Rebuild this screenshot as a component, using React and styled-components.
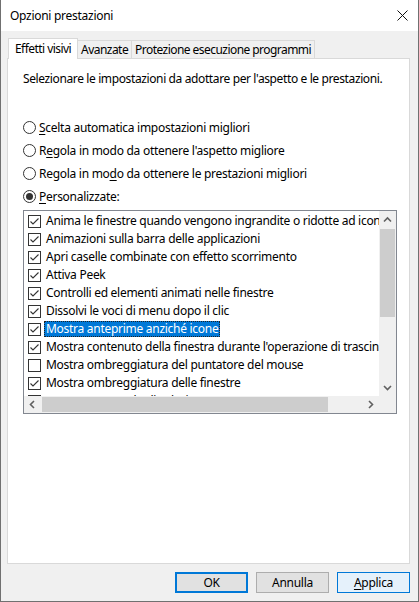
import React from "react";
import styled, { createGlobalStyle } from "styled-components";

const Global = createGlobalStyle`
  html, body { margin: 0; padding: 0; background: #f0f0f0; }
  body {
    font-family: "Noto Sans", "Segoe UI", sans-serif;
    font-size: 12px;
    letter-spacing: -0.28px;
    color: #000;
  }
  * { box-sizing: border-box; }
`;

const Window = styled.div`
  width: 419px;
  height: 602px;
  display: flex;
  flex-direction: column;
  border: 1px solid #707070;
  border-top: none;
  background: #f0f0f0;
`;

const TitleBar = styled.div`
  height: 31px;
  flex: none;
  background: #fff;
  display: flex;
  align-items: center;
  justify-content: space-between;
  padding: 0 10px 0 9px;
  line-height: 16px;
`;

const Client = styled.div`
  flex: 1;
  display: flex;
  flex-direction: column;
  padding: 7px 8px 8px 6px;
  min-height: 0;
`;

const TabStrip = styled.div`
  height: 20px;
  flex: none;
  display: flex;
  align-items: flex-end;
  padding-left: 1px;
`;

const Tab = styled.div`
  flex: none;
  height: ${(p) => (p.$active ? 21 : 18)}px;
  margin-bottom: ${(p) => (p.$active ? -1 : 0)}px;
  padding: ${(p) => (p.$active ? "0 6px" : "1px 3px 0")};
  background: ${(p) => (p.$active ? "#fff" : "#f0f0f0")};
  border: 1px solid #d9d9d9;
  border-bottom: none;
  border-left: ${(p) => (p.$first ? "1px solid #d9d9d9" : "none")};
  position: relative;
  z-index: ${(p) => (p.$active ? 2 : 1)};
  display: flex;
  align-items: center;
  justify-content: center;
  line-height: 16px;
  letter-spacing: -0.55px;
  white-space: nowrap;
`;

const Panel = styled.div`
  flex: 1;
  min-height: 0;
  background: #fff;
  border: 1px solid #d9d9d9;
  padding: 12px 0 0 15px;
  display: flex;
  flex-direction: column;
`;

const Description = styled.div`
  line-height: 16px;
  white-space: nowrap;
  letter-spacing: -0.38px;
`;

const RadioGroup = styled.div`
  margin-top: 29px;
  display: flex;
  flex-direction: column;
`;

const RadioRow = styled.div`
  height: 23px;
  display: flex;
  align-items: center;
  gap: 3px;
  line-height: 16px;
  white-space: nowrap;
`;

const RadioCircle = styled.span`
  width: 13px;
  height: 13px;
  flex: none;
  border: 1px solid #333;
  border-radius: 50%;
  background: #fff;
  display: flex;
  align-items: center;
  justify-content: center;
  &::after {
    content: "";
    width: 7px;
    height: 7px;
    border-radius: 50%;
    background: ${(p) => (p.$checked ? "#333" : "transparent")};
  }
`;

const ListBox = styled.div`
  margin-top: 2px;
  width: 374px;
  height: 204px;
  flex: none;
  border: 1px solid #828790;
  display: grid;
  grid-template-columns: minmax(0, 1fr) 17px;
  grid-template-rows: minmax(0, 1fr) 17px;
  background: #fff;
`;

const ListContent = styled.div`
  overflow: hidden;
  min-width: 0;
  min-height: 0;
  padding: 1px 0 0 4px;
`;

const ItemRow = styled.div`
  height: 18px;
  display: flex;
  align-items: center;
  white-space: nowrap;
`;

const CheckBox = styled.span`
  width: 13px;
  height: 13px;
  flex: none;
  border: 1px solid #333;
  background: #fff;
  display: flex;
  align-items: center;
  justify-content: center;
`;

const ItemLabel = styled.span`
  margin-left: 3px;
  height: 16px;
  line-height: 14px;
  padding: 0 1px;
  border: 1px dotted ${(p) => (p.$selected ? "#222" : "transparent")};
  background: ${(p) => (p.$selected ? "#0078d7" : "transparent")};
  color: ${(p) => (p.$selected ? "#fff" : "#000")};
`;

const VScroll = styled.div`
  background: #f0f0f0;
  display: flex;
  flex-direction: column;
  min-height: 0;
`;

const HScroll = styled.div`
  background: #f0f0f0;
  display: flex;
  min-width: 0;
`;

const Corner = styled.div`
  background: #f0f0f0;
`;

const ArrowBox = styled.div`
  width: 17px;
  height: 17px;
  flex: none;
  display: flex;
  align-items: center;
  justify-content: center;
`;

const VTrack = styled.div`
  flex: 1;
  padding: 1px 1px 0 1px;
`;

const VThumb = styled.div`
  height: 88px;
  background: #cdcdcd;
`;

const HTrack = styled.div`
  flex: 1;
  padding: 1px 0 1px 1px;
`;

const HThumb = styled.div`
  width: 286px;
  height: 100%;
  background: #cdcdcd;
`;

const ButtonRow = styled.div`
  flex: none;
  margin-top: 8px;
  display: flex;
  justify-content: flex-end;
  gap: 8px;
`;

const Button = styled.div`
  width: 73px;
  height: 21px;
  display: flex;
  align-items: center;
  justify-content: center;
  line-height: 16px;
  background: ${(p) => (p.$hover ? "#e5f1fb" : "#e1e1e1")};
  border: ${(p) =>
    p.$default ? "2px solid #0078d7" : p.$hover ? "1px solid #0078d7" : "1px solid #adadad"};
`;

const U = styled.span`
  text-decoration: underline;
  text-underline-offset: 2px;
`;

const Chevron = ({ dir }) => {
  const paths = {
    up: "M5 10.5 L8.5 7 L12 10.5",
    down: "M5 7 L8.5 10.5 L12 7",
    left: "M10 5 L6.5 8.5 L10 12",
    right: "M7 5 L10.5 8.5 L7 12",
  };
  return (
    <svg width="17" height="17" viewBox="0 0 17 17">
      <path d={paths[dir]} fill="none" stroke="#606060" strokeWidth="1.6" />
    </svg>
  );
};

const CloseIcon = () => (
  <svg width="11" height="11" viewBox="0 0 11 11">
    <path d="M0.5 0.5 L10.5 10.5 M10.5 0.5 L0.5 10.5" stroke="#111" strokeWidth="1" />
  </svg>
);

const CheckMark = () => (
  <svg width="11" height="11" viewBox="0 0 11 11">
    <path d="M1.5 5.5 L4 8 L9.5 2.5" fill="none" stroke="#333" strokeWidth="1.1" />
  </svg>
);

const items = [
  { t: "Anima le finestre quando vengono ingrandite o ridotte ad icone", c: true },
  { t: "Animazioni sulla barra delle applicazioni", c: true },
  { t: "Apri caselle combinate con effetto scorrimento", c: true },
  { t: "Attiva Peek", c: true },
  { t: "Controlli ed elementi animati nelle finestre", c: true },
  { t: "Dissolvi le voci di menu dopo il clic", c: true },
  { t: "Mostra anteprime anziché icone", c: true, s: true },
  { t: "Mostra contenuto della finestra durante l'operazione di trascinamento", c: true },
  { t: "Mostra ombreggiatura del puntatore del mouse", c: false },
  { t: "Mostra ombreggiatura delle finestre", c: true },
  { t: "Mostra rettangolo di selezione trasparente", c: true },
  { t: "Smussa gli angoli dei caratteri dello schermo", c: true },
];

export default function App() {
  return (
    <>
      <Global />
      <Window>
        <TitleBar>
          <span>Opzioni prestazioni</span>
          <CloseIcon />
        </TitleBar>
        <Client>
          <TabStrip>
            <Tab $active $first>Effetti visivi</Tab>
            <Tab>Avanzate</Tab>
            <Tab>Protezione esecuzione programmi</Tab>
          </TabStrip>
          <Panel>
            <Description>
              Selezionare le impostazioni da adottare per l'aspetto e le prestazioni.
            </Description>
            <RadioGroup>
              <RadioRow>
                <RadioCircle />
                <span><U>S</U>celta automatica impostazioni migliori</span>
              </RadioRow>
              <RadioRow>
                <RadioCircle />
                <span>R<U>e</U>gola in modo da ottenere l'aspetto migliore</span>
              </RadioRow>
              <RadioRow>
                <RadioCircle />
                <span>Regola in mo<U>d</U>o da ottenere le prestazioni migliori</span>
              </RadioRow>
              <RadioRow>
                <RadioCircle $checked />
                <span><U>P</U>ersonalizzate:</span>
              </RadioRow>
            </RadioGroup>
            <ListBox>
              <ListContent>
                {items.map((it) => (
                  <ItemRow key={it.t}>
                    <CheckBox>{it.c && <CheckMark />}</CheckBox>
                    <ItemLabel $selected={it.s}>{it.t}</ItemLabel>
                  </ItemRow>
                ))}
              </ListContent>
              <VScroll>
                <ArrowBox><Chevron dir="up" /></ArrowBox>
                <VTrack><VThumb /></VTrack>
                <ArrowBox><Chevron dir="down" /></ArrowBox>
              </VScroll>
              <HScroll>
                <ArrowBox><Chevron dir="left" /></ArrowBox>
                <HTrack><HThumb /></HTrack>
                <ArrowBox><Chevron dir="right" /></ArrowBox>
              </HScroll>
              <Corner />
            </ListBox>
          </Panel>
          <ButtonRow>
            <Button $default>OK</Button>
            <Button>Annulla</Button>
            <Button $hover><span><U>A</U>pplica</span></Button>
          </ButtonRow>
        </Client>
      </Window>
    </>
  );
}
